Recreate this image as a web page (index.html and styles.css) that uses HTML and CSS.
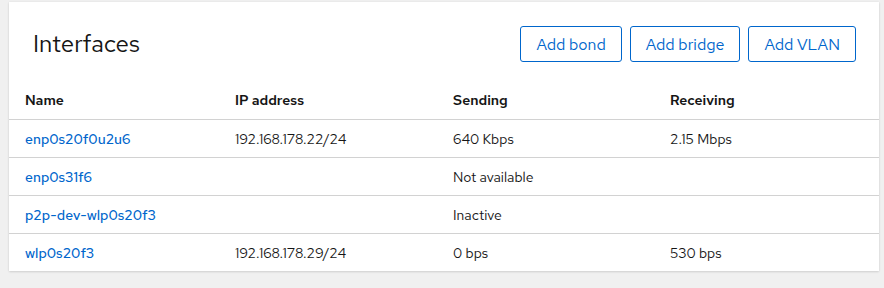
FILE: index.html
```
<!DOCTYPE html>
<html lang="en">
<head>
<meta charset="utf-8" />
<title>Networking</title>
<link rel="stylesheet" href="styles.css">
</head>
<body>
<div class="page">
    <div class="card">
        <div class="card-head">
            <h2 class="card-title">Interfaces</h2>
            <div class="actions">
                <button class="btn">Add bond</button>
                <button class="btn">Add bridge</button>
                <button class="btn">Add VLAN</button>
            </div>
        </div>
        <table class="iface">
            <tr>
                <th class="c1">Name</th>
                <th class="c2">IP address</th>
                <th class="c3">Sending</th>
                <th class="c4">Receiving</th>
            </tr>
            <tr>
                <td><a href="#">enp0s20f0u2u6</a></td>
                <td>192.168.178.22/24</td>
                <td>640 Kbps</td>
                <td>2.15 Mbps</td>
            </tr>
            <tr>
                <td><a href="#">enp0s31f6</a></td>
                <td></td>
                <td>Not available</td>
                <td></td>
            </tr>
            <tr>
                <td><a href="#">p2p-dev-wlp0s20f3</a></td>
                <td></td>
                <td>Inactive</td>
                <td></td>
            </tr>
            <tr>
                <td><a href="#">wlp0s20f3</a></td>
                <td>192.168.178.29/24</td>
                <td>0 bps</td>
                <td>530 bps</td>
            </tr>
        </table>
    </div>
</div>
</body>
</html>
```
FILE: styles.css
```
html{font-size:14px;font-family:"Red Hat Text","Open Sans","Liberation Sans",sans-serif;color:#151515;}
body{margin:0;background:#f0f0f0;}
a{color:#0066cc;text-decoration:none;font-weight:500;}

/*==================== Card ====================*/
.page{padding:2px 5px 16px 9px;}
.card{background:#fff;box-shadow:0 1px 2px rgba(3,3,3,0.12),0 0 2px rgba(3,3,3,0.06);}
.card-head{display:flex;align-items:center;justify-content:space-between;padding:24px 23px 0 24px;margin-bottom:19px;}
.card-title{margin:0;font-size:24px;font-weight:400;line-height:36px;}
.actions{display:flex;gap:8px;}
.btn{font-family:inherit;font-size:16px;color:#0066cc;background:#fff;border:1px solid #0066cc;border-radius:3px;height:36px;padding:0 15px;cursor:pointer;}

/*==================== Table ====================*/
.iface{width:100%;border-collapse:collapse;}
.iface th{text-align:left;font-weight:600;height:38px;padding:0 16px;}
.iface td{height:37px;padding:0 16px;border-top:1px solid #d2d2d2;}
.c1{width:178px;}
.c2{width:186px;}
.c3{width:185px;}
```
